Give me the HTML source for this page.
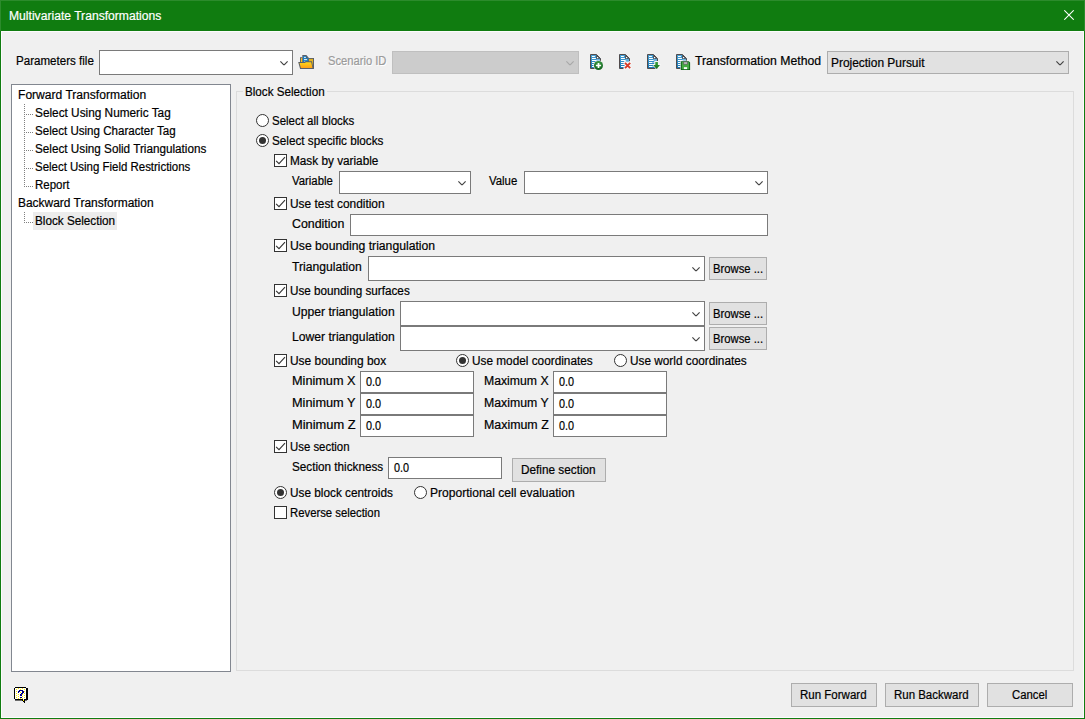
<!DOCTYPE html>
<html>
<head>
<meta charset="utf-8">
<title>Multivariate Transformations</title>
<style>
*{box-sizing:border-box;margin:0;padding:0}
html,body{width:1085px;height:719px;overflow:hidden;background:#f0f0f0}
body{font-family:"Liberation Sans",sans-serif;font-size:12px;color:#000;position:relative}
.abs{position:absolute}
#win{position:absolute;left:0;top:0;width:1085px;height:719px;border:1px solid #107c10;background:#f0f0f0}
#title{position:absolute;left:0;top:0;width:1085px;height:31px;background:#107c10;border:1px solid #2c8b2c;border-bottom:0}
.t{position:absolute;white-space:nowrap;line-height:14px;height:14px;transform-origin:0 50%;-webkit-text-stroke:0.2px currentColor}
.w{color:#fff}
.g{color:#9b9b9b;text-shadow:1px 1px 0 #fff}
.combo{position:absolute;background:#fff;border:1px solid #7a7a7a}
.combo.dis{background:#cccccc;border-color:#bfbfbf}
.combo.flat{background:#e1e1e1;border-color:#adadad}
.edit{position:absolute;background:#fff;border:1px solid #7a7a7a}
.btn{position:absolute;background:#e1e1e1;border:1px solid #adadad}
.cb{position:absolute;width:13px;height:13px;background:#fff;border:1px solid #333}
.rb{position:absolute;width:13px;height:13px;background:#fff;border:1px solid #333;border-radius:50%}
.rb.on::after{content:"";position:absolute;left:2px;top:2px;width:7px;height:7px;border-radius:50%;background:#333}
.vdot{width:1px;background-image:linear-gradient(to bottom,#808080 50%,transparent 50%);background-size:1px 2px}
.hdot{height:1px;background-image:linear-gradient(to right,#808080 50%,transparent 50%);background-size:2px 1px}
</style>
</head>
<body>
<div id="win"></div>
<div class="abs" style="left:1px;top:31px;width:1083px;height:687px;border:1px solid #fcfcfc"></div>
<div id="title"></div>
<svg class="abs" style="left:1064px;top:10px" width="10" height="10" viewBox="0 0 10 10"><path d="M0.3 0.3L9.7 9.7M9.7 0.3L0.3 9.7" stroke="#fff" stroke-width="1.05" fill="none"/></svg>

<div class="combo " style="left:99px;top:50px;width:194px;height:25px"></div><div class="abs" style="left:280px;top:61px;width:8px;height:4px;line-height:0"><svg width="8" height="4" viewBox="0 0 8 4" style="overflow:visible"><path d="M0.4 0.4L3.6 3.6H4.4L7.6 0.4" stroke="#444" stroke-width="1.15" fill="none"/></svg></div>
<svg width="0" height="0" style="position:absolute"><defs>
<linearGradient id="gb" x1="0" y1="0" x2="0" y2="1"><stop offset="0" stop-color="#4aa3d8"/><stop offset="1" stop-color="#1676b3"/></linearGradient>
<linearGradient id="gf" x1="0" y1="0" x2="0" y2="1"><stop offset="0" stop-color="#ffd917"/><stop offset="1" stop-color="#ff9f18"/></linearGradient>
<linearGradient id="gy" x1="0" y1="0" x2="0" y2="1"><stop offset="0" stop-color="#dcae22"/><stop offset="1" stop-color="#ffc81e"/></linearGradient>
<radialGradient id="gg" cx="0.5" cy="0.3" r="0.8"><stop offset="0" stop-color="#3fa244"/><stop offset="1" stop-color="#075417"/></radialGradient>
<linearGradient id="ga" x1="0" y1="0" x2="0" y2="1"><stop offset="0" stop-color="#3aa23a"/><stop offset="1" stop-color="#136c1c"/></linearGradient>
<g id="doc">
<path d="M0.5 0.5H6.5L10.5 4.5V14.5H0.5Z" fill="url(#gb)" stroke="#514b4c" stroke-width="1"/>
<path d="M6.2 0.5V4.8H10.5Z" fill="#514b4c"/>
<rect x="7" y="3" width="1.2" height="1.2" fill="#fff"/>
<path d="M2 2.5H4.9M2 4.5H5.9M2 6.5H6.9M2 8.5H5.2M2 10.5H5.4M2 12.5H5.6" stroke="#fff" stroke-width="1"/>
<path d="M5.2 8.5H8.5M5.4 10.5H8.5M5.6 12.5H8.5" stroke="#fff" stroke-width="1" opacity="0.5"/>
<rect x="6.4" y="5.2" width="3.5" height="1.6" fill="#8cc6e8" opacity="0.8"/>
</g>
</defs></svg>
<!-- folder -->
<svg class="abs" style="left:298px;top:55px" width="16" height="14" viewBox="0 0 16 14">
<path d="M2 2.2H4.4V7.4H2Z" fill="#5a5f68"/><rect x="2.9" y="3.1" width="1.2" height="4.2" fill="#ffc61a"/>
<path d="M10.4 3H16V13.9H10.4Z" fill="#5a5f68"/><rect x="10.9" y="3.9" width="4.1" height="9" fill="url(#gy)"/>
<path d="M4.3 0H8.4L10.9 2.9V7.2H4.3Z" fill="#5a5f68"/>
<path d="M5.1 0.9H8L10.1 3.3V7.2H5.1Z" fill="#1c80c2"/>
<path d="M8 0.9L10.1 3.3H8Z" fill="#5a5f68"/>
<path d="M6 2.4H7.9M6 4.6H9.1" stroke="#fff" stroke-width="0.9"/>
<rect x="6.4" y="6" width="1" height="0.9" fill="#ddd"/>
<path d="M0.2 7.1H6.6L7.4 6.2H14L15.6 13.9H2.1Z" fill="#5a5f68"/>
<path d="M1.5 8.1H7L7.8 7.2H13.2L14.5 13H2.9Z" fill="url(#gf)"/>
</svg>
<!-- doc + plus -->
<svg class="abs" style="left:590px;top:54px" width="14" height="17" viewBox="0 0 14 17">
<use href="#doc"/>
<circle cx="8.5" cy="11.5" r="5.1" fill="#f0f0f0"/>
<circle cx="8.5" cy="11.5" r="4.5" fill="url(#gg)"/>
<path d="M5.9 11.5H11.1M8.5 8.9V14.1" stroke="#fff" stroke-width="1.7"/>
</svg>
<!-- doc + x -->
<svg class="abs" style="left:619px;top:54px" width="14" height="17" viewBox="0 0 14 17">
<use href="#doc"/>
<path d="M5.5 7.5H13V15.5H5.5Z" fill="#f0f0f0"/>
<path d="M7 5.7H9.9L8.45 7.6Z" fill="#5aaee0"/>
<path d="M6 8.8L11.2 14.2M11.2 8.8L6 14.2" stroke="#f8f8f8" stroke-width="3.2" stroke-linecap="round"/>
<path d="M6 8.8L11.2 14.2M11.2 8.8L6 14.2" stroke="#d83a26" stroke-width="1.9"/>
</svg>
<!-- doc + arrow -->
<svg class="abs" style="left:647px;top:54px" width="14" height="17" viewBox="0 0 14 17">
<use href="#doc"/>
<path d="M7.3 7.1H11.8V10H14.4L9.6 16L4.8 10H7.3Z" fill="#f6f6f6"/>
<path d="M8.3 8H10.9V10.9H13L9.6 14.9L6.2 10.9H8.3Z" fill="url(#ga)"/>
</svg>
<!-- doc + floppy -->
<svg class="abs" style="left:676px;top:54px" width="15" height="17" viewBox="0 0 15 17">
<use href="#doc"/>
<rect x="4.3" y="6.6" width="10.4" height="10" fill="#f0f0f0"/>
<path d="M4.8 7.2H12.7L14.1 8.6V16H4.8Z" fill="#0b5a16"/>
<path d="M5.7 8H12.5L13.2 8.8V15.2H5.7Z" fill="#45ab43"/>
<rect x="7.2" y="7.7" width="4.7" height="2.9" fill="#6d6d6d"/>
<rect x="8.1" y="8.3" width="2.9" height="1.5" fill="#c8c8c8"/>
<rect x="7.9" y="13.2" width="3.2" height="1.9" fill="#fff"/>
</svg>

<div class="combo dis" style="left:392px;top:51px;width:187px;height:23px"></div><div class="abs" style="left:566px;top:61px;width:8px;height:4px;line-height:0"><svg width="8" height="4" viewBox="0 0 8 4" style="overflow:visible"><path d="M0.4 0.4L3.6 3.6H4.4L7.6 0.4" stroke="#a8a8a8" stroke-width="1.15" fill="none"/></svg></div>
<div class="combo flat" style="left:827px;top:51px;width:242px;height:23px"></div><div class="abs" style="left:1056px;top:61px;width:8px;height:4px;line-height:0"><svg width="8" height="4" viewBox="0 0 8 4" style="overflow:visible"><path d="M0.4 0.4L3.6 3.6H4.4L7.6 0.4" stroke="#444" stroke-width="1.15" fill="none"/></svg></div>
<div class="abs" style="left:11px;top:84px;width:220px;height:588px;background:#fff;border:1px solid #828790"></div>
<div class="abs" style="left:33px;top:212px;width:84px;height:18px;background:#ececec"></div>
<div class="abs vdot" style="left:24px;top:104px;height:83px"></div>
<div class="abs hdot" style="left:24px;top:114px;width:10px"></div>
<div class="abs hdot" style="left:24px;top:132px;width:10px"></div>
<div class="abs hdot" style="left:24px;top:150px;width:10px"></div>
<div class="abs hdot" style="left:24px;top:168px;width:10px"></div>
<div class="abs hdot" style="left:24px;top:186px;width:10px"></div>
<div class="abs vdot" style="left:24px;top:212px;height:11px"></div>
<div class="abs hdot" style="left:24px;top:222px;width:10px"></div>
<div class="abs" style="left:236px;top:91px;width:838px;height:580px;border:1px solid #dcdcdc"></div>
<div class="abs" style="left:243px;top:88px;width:84px;height:8px;background:#f0f0f0"></div>
<div class="rb" style="left:256px;top:114px"></div>
<div class="rb on" style="left:256px;top:134px"></div>
<div class="cb" style="left:274px;top:154px"></div><svg class="abs" style="left:274px;top:154px" width="13" height="13" viewBox="0 0 13 13"><path d="M2.1 6.8L5 9.6L11 3.1" stroke="#333" stroke-width="1.1" fill="none"/></svg>
<div class="combo " style="left:339px;top:171px;width:132px;height:23px"></div><div class="abs" style="left:458px;top:181px;width:8px;height:4px;line-height:0"><svg width="8" height="4" viewBox="0 0 8 4" style="overflow:visible"><path d="M0.4 0.4L3.6 3.6H4.4L7.6 0.4" stroke="#444" stroke-width="1.15" fill="none"/></svg></div>
<div class="combo " style="left:524px;top:171px;width:244px;height:23px"></div><div class="abs" style="left:755px;top:181px;width:8px;height:4px;line-height:0"><svg width="8" height="4" viewBox="0 0 8 4" style="overflow:visible"><path d="M0.4 0.4L3.6 3.6H4.4L7.6 0.4" stroke="#444" stroke-width="1.15" fill="none"/></svg></div>
<div class="cb" style="left:274px;top:197px"></div><svg class="abs" style="left:274px;top:197px" width="13" height="13" viewBox="0 0 13 13"><path d="M2.1 6.8L5 9.6L11 3.1" stroke="#333" stroke-width="1.1" fill="none"/></svg>
<div class="edit" style="left:350px;top:214px;width:418px;height:22px"></div>
<div class="cb" style="left:274px;top:239px"></div><svg class="abs" style="left:274px;top:239px" width="13" height="13" viewBox="0 0 13 13"><path d="M2.1 6.8L5 9.6L11 3.1" stroke="#333" stroke-width="1.1" fill="none"/></svg>
<div class="combo " style="left:368px;top:256px;width:337px;height:25px"></div><div class="abs" style="left:692px;top:267px;width:8px;height:4px;line-height:0"><svg width="8" height="4" viewBox="0 0 8 4" style="overflow:visible"><path d="M0.4 0.4L3.6 3.6H4.4L7.6 0.4" stroke="#444" stroke-width="1.15" fill="none"/></svg></div>
<div class="btn" style="left:709px;top:257px;width:58px;height:23px"></div>
<div class="cb" style="left:274px;top:284px"></div><svg class="abs" style="left:274px;top:284px" width="13" height="13" viewBox="0 0 13 13"><path d="M2.1 6.8L5 9.6L11 3.1" stroke="#333" stroke-width="1.1" fill="none"/></svg>
<div class="combo " style="left:400px;top:301px;width:305px;height:25px"></div><div class="abs" style="left:692px;top:312px;width:8px;height:4px;line-height:0"><svg width="8" height="4" viewBox="0 0 8 4" style="overflow:visible"><path d="M0.4 0.4L3.6 3.6H4.4L7.6 0.4" stroke="#444" stroke-width="1.15" fill="none"/></svg></div>
<div class="btn" style="left:709px;top:302px;width:58px;height:23px"></div>
<div class="combo " style="left:400px;top:326px;width:305px;height:25px"></div><div class="abs" style="left:692px;top:337px;width:8px;height:4px;line-height:0"><svg width="8" height="4" viewBox="0 0 8 4" style="overflow:visible"><path d="M0.4 0.4L3.6 3.6H4.4L7.6 0.4" stroke="#444" stroke-width="1.15" fill="none"/></svg></div>
<div class="btn" style="left:709px;top:327px;width:58px;height:23px"></div>
<div class="cb" style="left:274px;top:354px"></div><svg class="abs" style="left:274px;top:354px" width="13" height="13" viewBox="0 0 13 13"><path d="M2.1 6.8L5 9.6L11 3.1" stroke="#333" stroke-width="1.1" fill="none"/></svg>
<div class="rb on" style="left:456px;top:354px"></div>
<div class="rb" style="left:614px;top:354px"></div>
<div class="edit" style="left:360px;top:371px;width:114px;height:22px"></div>
<div class="edit" style="left:553px;top:371px;width:114px;height:22px"></div>
<div class="edit" style="left:360px;top:393px;width:114px;height:22px"></div>
<div class="edit" style="left:553px;top:393px;width:114px;height:22px"></div>
<div class="edit" style="left:360px;top:415px;width:114px;height:22px"></div>
<div class="edit" style="left:553px;top:415px;width:114px;height:22px"></div>
<div class="cb" style="left:274px;top:440px"></div><svg class="abs" style="left:274px;top:440px" width="13" height="13" viewBox="0 0 13 13"><path d="M2.1 6.8L5 9.6L11 3.1" stroke="#333" stroke-width="1.1" fill="none"/></svg>
<div class="edit" style="left:388px;top:457px;width:114px;height:22px"></div>
<div class="btn" style="left:512px;top:458px;width:94px;height:24px"></div>
<div class="rb on" style="left:274px;top:486px"></div>
<div class="rb" style="left:414px;top:486px"></div>
<div class="cb" style="left:274px;top:506px"></div>
<svg class="abs" style="left:13px;top:686px" width="16" height="18" viewBox="0 0 16 18" shape-rendering="crispEdges">
<rect x="14" y="2" width="1" height="12" fill="#000"/>
<rect x="2" y="14" width="8" height="1" fill="#6a6a6a"/>
<rect x="12" y="14" width="2" height="1" fill="#6a6a6a"/>
<path d="M9 14H12V17H11V16H10V15H9Z" fill="#000"/>
<rect x="1" y="1" width="13" height="13" fill="#000"/>
<rect x="1" y="1" width="1" height="1" fill="#f0f0f0"/><rect x="13" y="1" width="1" height="1" fill="#f0f0f0"/><rect x="1" y="13" width="1" height="1" fill="#f0f0f0"/>
<rect x="2" y="2" width="11" height="11" fill="#fff"/>
<path d="M3 3h1v1h-1zM7 3h1v1h-1zM11 3h1v1h-1zM5 2h1v1h-1zM9 2h1v1h-1zM3 5h1v1h-1zM11 5h1v1h-1zM3 7h1v1h-1zM11 7h1v1h-1zM5 8h1v1h-1zM3 9h1v1h-1zM11 9h1v1h-1zM3 11h1v1h-1zM5 10h1v1h-1zM9 10h1v1h-1zM11 11h1v1h-1zM5 12h1v1h-1zM7 12h1v1h-1zM9 12h1v1h-1zM7 6h1v1h-1zM9 8h1v1h-1z" fill="#ffee00"/>
<path d="M6 4h4v1h-4zM5 5h2v1h-2zM9 5h2v1h-2zM5 6h1v1h-1zM9 6h2v1h-2zM8 7h2v1h-2zM7 8h2v2h-2zM7 11h2v1h-2z" fill="#000080"/>
<rect x="8" y="8" width="1" height="1" fill="#0000e8"/>
<path d="M9 13H11V14H10Z" fill="#fff"/><rect x="10" y="14" width="1" height="1" fill="#ffee00"/>
</svg>

<div class="btn" style="left:791px;top:683px;width:86px;height:24px"></div>
<div class="btn" style="left:885px;top:683px;width:94px;height:24px"></div>
<div class="btn" style="left:987px;top:683px;width:86px;height:24px"></div>
<div class="t w" style="left:8.81px;top:9px;transform:scaleX(1.0107)">Multivariate Transformations</div>
<div class="t " style="left:15.85px;top:54px;transform:scaleX(0.9649)">Parameters file</div>
<div class="t g" style="left:328.29px;top:54px;transform:scaleX(0.9322)">Scenario ID</div>
<div class="t " style="left:694.93px;top:54px;transform:scaleX(1.0199)">Transformation Method</div>
<div class="t " style="left:830.82px;top:56px;transform:scaleX(0.9939)">Projection Pursuit</div>
<div class="t " style="left:17.81px;top:88px;transform:scaleX(1.0063)">Forward Transformation</div>
<div class="t " style="left:35.26px;top:106px;transform:scaleX(0.9845)">Select Using Numeric Tag</div>
<div class="t " style="left:35.27px;top:124px;transform:scaleX(0.9645)">Select Using Character Tag</div>
<div class="t " style="left:35.27px;top:142px;transform:scaleX(0.9768)">Select Using Solid Triangulations</div>
<div class="t " style="left:35.28px;top:160px;transform:scaleX(0.9546)">Select Using Field Restrictions</div>
<div class="t " style="left:34.86px;top:178px;transform:scaleX(0.9558)">Report</div>
<div class="t " style="left:17.82px;top:196px;transform:scaleX(0.9963)">Backward Transformation</div>
<div class="t " style="left:34.84px;top:214px;transform:scaleX(0.9766)">Block Selection</div>
<div class="t " style="left:244.84px;top:85px;transform:scaleX(0.9704)">Block Selection</div>
<div class="t " style="left:272.28px;top:114px;transform:scaleX(0.9570)">Select all blocks</div>
<div class="t " style="left:272.27px;top:134px;transform:scaleX(0.9764)">Select specific blocks</div>
<div class="t " style="left:289.83px;top:154px;transform:scaleX(0.9817)">Mask by variable</div>
<div class="t " style="left:291.95px;top:174px;transform:scaleX(0.9448)">Variable</div>
<div class="t " style="left:488.95px;top:174px;transform:scaleX(0.9482)">Value</div>
<div class="t " style="left:289.88px;top:197px;transform:scaleX(0.9917)">Use test condition</div>
<div class="t " style="left:292.17px;top:217px;transform:scaleX(1.0322)">Condition</div>
<div class="t " style="left:289.86px;top:239px;transform:scaleX(1.0166)">Use bounding triangulation</div>
<div class="t " style="left:291.73px;top:260px;transform:scaleX(1.0121)">Triangulation</div>
<div class="t " style="left:713.18px;top:262px;transform:scaleX(0.9381)">Browse ...</div>
<div class="t " style="left:289.90px;top:284px;transform:scaleX(0.9755)">Use bounding surfaces</div>
<div class="t " style="left:291.86px;top:305px;transform:scaleX(1.0122)">Upper triangulation</div>
<div class="t " style="left:713.18px;top:307px;transform:scaleX(0.9381)">Browse ...</div>
<div class="t " style="left:291.80px;top:330px;transform:scaleX(1.0127)">Lower triangulation</div>
<div class="t " style="left:713.18px;top:332px;transform:scaleX(0.9381)">Browse ...</div>
<div class="t " style="left:289.88px;top:354px;transform:scaleX(0.9939)">Use bounding box</div>
<div class="t " style="left:471.89px;top:354px;transform:scaleX(0.9838)">Use model coordinates</div>
<div class="t " style="left:629.89px;top:354px;transform:scaleX(0.9833)">Use world coordinates</div>
<div class="t " style="left:291.76px;top:374px;transform:scaleX(1.0583)">Minimum X</div>
<div class="t " style="left:291.75px;top:396px;transform:scaleX(1.0625)">Minimum Y</div>
<div class="t " style="left:291.74px;top:418px;transform:scaleX(1.0729)">Minimum Z</div>
<div class="t " style="left:483.80px;top:374px;transform:scaleX(1.0192)">Maximum X</div>
<div class="t " style="left:483.79px;top:396px;transform:scaleX(1.0230)">Maximum Y</div>
<div class="t " style="left:483.78px;top:418px;transform:scaleX(1.0325)">Maximum Z</div>
<div class="t " style="left:366.18px;top:375px;transform:scaleX(0.9019)">0.0</div>
<div class="t " style="left:559.18px;top:375px;transform:scaleX(0.9019)">0.0</div>
<div class="t " style="left:366.18px;top:397px;transform:scaleX(0.9019)">0.0</div>
<div class="t " style="left:559.18px;top:397px;transform:scaleX(0.9019)">0.0</div>
<div class="t " style="left:366.18px;top:419px;transform:scaleX(0.9019)">0.0</div>
<div class="t " style="left:559.18px;top:419px;transform:scaleX(0.9019)">0.0</div>
<div class="t " style="left:289.92px;top:440px;transform:scaleX(0.9494)">Use section</div>
<div class="t " style="left:292.27px;top:460px;transform:scaleX(0.9762)">Section thickness</div>
<div class="t " style="left:394.18px;top:461px;transform:scaleX(0.9019)">0.0</div>
<div class="t " style="left:520.83px;top:463px;transform:scaleX(0.9815)">Define section</div>
<div class="t " style="left:289.89px;top:486px;transform:scaleX(0.9831)">Use block centroids</div>
<div class="t " style="left:429.81px;top:486px;transform:scaleX(1.0041)">Proportional cell evaluation</div>
<div class="t " style="left:289.87px;top:506px;transform:scaleX(0.9432)">Reverse selection</div>
<div class="t " style="left:799.85px;top:688px;transform:scaleX(0.9601)">Run Forward</div>
<div class="t " style="left:893.86px;top:688px;transform:scaleX(0.9557)">Run Backward</div>
<div class="t " style="left:1012.23px;top:688px;transform:scaleX(0.9433)">Cancel</div>
</body>
</html>
